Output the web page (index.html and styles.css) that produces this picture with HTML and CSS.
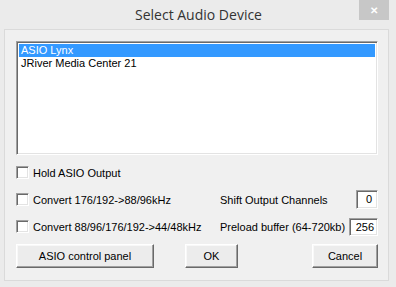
FILE: index.html
```html
<!DOCTYPE html>
<html lang="en">
<head>
    <meta charset="UTF-8">
    <title>Select Audio Device</title>
    <link rel="stylesheet" href="styles.css">
</head>
<body>
    <div class="window">
        <div class="titlebar">
            <span class="title">Select Audio Device</span>
            <span class="close">&#x2715;</span>
        </div>
        <div class="client">
            <div class="listbox">
                <div class="item selected">ASIO Lynx</div>
                <div class="item">JRiver Media Center 21</div>
            </div>

            <div class="options">
                <label class="check"><span class="box"></span>Hold ASIO Output</label>
                <span></span>
                <span></span>

                <label class="check"><span class="box"></span>Convert 176/192-&gt;88/96kHz</label>
                <span class="field-label">Shift Output Channels</span>
                <span class="edit small">0</span>

                <label class="check"><span class="box"></span>Convert 88/96/176/192-&gt;44/48kHz</label>
                <span class="field-label">Preload buffer (64-720kb)</span>
                <span class="edit wide">256</span>
            </div>

            <div class="buttons">
                <button class="btn btn-asio">ASIO control panel</button>
                <button class="btn btn-ok">OK</button>
                <button class="btn btn-cancel">Cancel</button>
            </div>
        </div>
    </div>
</body>
</html>
```

FILE: styles.css
```css
body {
    margin: 0;
    padding: 0;
    font-family: "Liberation Sans", Arial, sans-serif;
    font-size: 11px;
    color: #000;
}

.window {
    width: 396px;
    height: 287px;
    background-color: #ebebeb;
    box-sizing: border-box;
    padding: 0 7px 0 4px;
}

.titlebar {
    height: 29px;
    display: flex;
    align-items: flex-start;
    position: relative;
}

.title {
    flex: 1;
    text-align: center;
    font-family: "Open Sans", "Noto Sans", sans-serif;
    font-size: 14px;
    color: #333;
    margin-top: 5px;
    padding-left: 4px;
}

.close {
    position: absolute;
    right: 0;
    top: 0;
    width: 30px;
    height: 20px;
    background-color: #c7c7c7;
    color: #fff;
    font-size: 10px;
    font-weight: bold;
    display: flex;
    align-items: center;
    justify-content: center;
}

.client {
    height: 252px;
    border: 1px solid #dadada;
    background-color: #f0f0f0;
    box-sizing: border-box;
    padding: 11px 10px 0 11px;
}

/* sunken 3d boxes */
.listbox,
.box,
.edit {
    border: 1px solid;
    border-color: #a0a0a0 #fff #fff #a0a0a0;
    box-shadow: inset 1px 1px #696969, inset -1px -1px #e3e3e3;
    background-color: #fff;
    box-sizing: border-box;
}

.listbox {
    width: 362px;
    height: 114px;
    padding: 2px;
}

.item {
    height: 13px;
    line-height: 13px;
    padding-left: 2px;
    white-space: nowrap;
}

.item.selected {
    background-color: #3399ff;
    color: #fff;
}

.options {
    margin-top: 4px;
    display: grid;
    grid-template-columns: 204px 1fr auto;
    grid-auto-rows: 27px;
    align-items: center;
}

.check {
    display: flex;
    align-items: center;
    white-space: nowrap;
}

.box {
    width: 13px;
    height: 13px;
    margin-right: 4px;
    flex: none;
}

.field-label {
    white-space: nowrap;
}

.edit {
    height: 19px;
    line-height: 17px;
    text-align: right;
    padding-right: 5px;
    justify-self: end;
}

.edit.small {
    width: 22px;
}

.edit.wide {
    width: 29px;
    height: 18px;
    padding-right: 3px;
}

.buttons {
    margin-top: 4px;
    display: flex;
}

.btn {
    height: 24px;
    font-family: inherit;
    font-size: 11px;
    color: #000;
    background-color: #ececec;
    border: 1px solid;
    border-color: #fff #696969 #696969 #fff;
    box-shadow: inset -1px -1px #a0a0a0, inset 1px 1px #f8f8f8;
    padding: 0;
}

.btn-asio {
    width: 138px;
}

.btn-ok {
    width: 53px;
    margin-left: 31px;
}

.btn-cancel {
    width: 66px;
    margin-left: auto;
}
```
